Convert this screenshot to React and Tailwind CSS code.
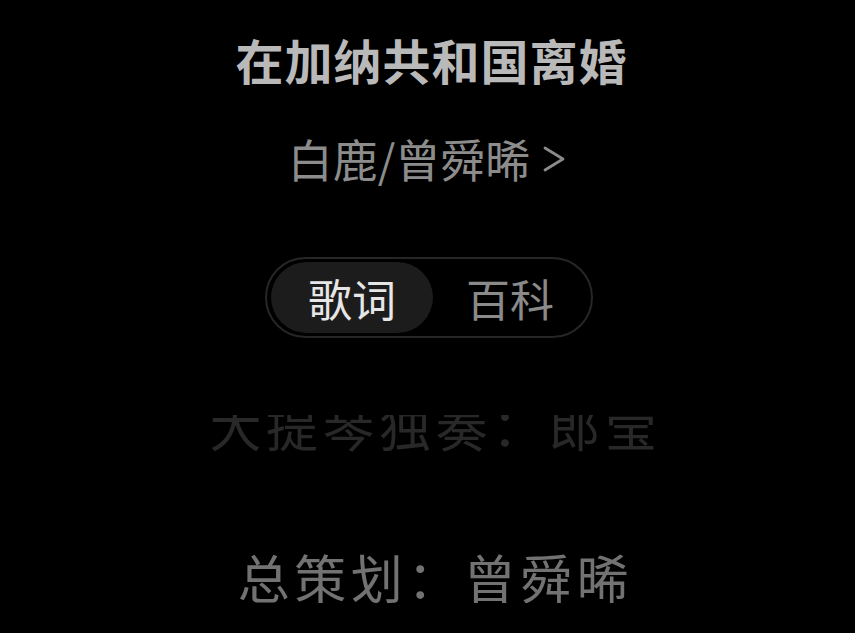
import React, { useState } from "react";

const cjk = { fontFamily: '"Noto Sans CJK SC", "Noto Sans", sans-serif' };

const song = {
  title: "在加纳共和国离婚",
  artists: "白鹿/曾舜晞",
  lines: ["大提琴独奏：郎莹", "总策划：曾舜晞"],
};

const ChevronRight = () => (
  <svg width="26" height="28" viewBox="0 0 26 28" fill="none" className="ml-[11px]">
    <path d="M4 3 L22 14 L4 25" stroke="#8a8a8a" strokeWidth="2.8" strokeLinecap="round" strokeLinejoin="round" />
  </svg>
);

const App = () => {
  const [tab, setTab] = useState("lyrics");

  return (
    <div className="w-[855px] h-[633px] bg-black overflow-hidden flex flex-col items-center" style={cjk}>
      <h1 className="mt-[35px] pl-[8px] text-[48px] leading-none font-bold text-[#b9b9b9] tracking-[1px]">
        {song.title}
      </h1>

      <div className="mt-[53px] flex items-center text-[45px] leading-none text-[#8c8c8c]">
        <span>{song.artists}</span>
        <ChevronRight />
      </div>

      {/* tab switch */}
      <div className="mt-[76px] ml-[3px] w-[328px] h-[81px] rounded-full border-2 border-[#262626] p-[4px] flex items-center">
        <button
          onClick={() => setTab("lyrics")}
          className={`w-[163px] h-[71px] rounded-full text-[44px] leading-none ${
            tab === "lyrics" ? "bg-[#1c1c1c] text-[#e6e6e6]" : "text-[#8a8a8a]"
          }`}
        >
          歌词
        </button>
        <button
          onClick={() => setTab("wiki")}
          className={`w-[155px] h-[71px] rounded-full text-[44px] leading-none ${
            tab === "wiki" ? "bg-[#1c1c1c] text-[#e6e6e6]" : "text-[#8a8a8a]"
          }`}
        >
          百科
        </button>
      </div>

      {/* lyric lines, the top one clipped and fading out */}
      <div className="mt-[77px] w-full overflow-hidden flex flex-col items-center text-[52px] leading-none">
        <div className="-mt-[16px] pl-[16px] text-[#282828] tracking-[4.5px]">{song.lines[0]}</div>
        <div className="mt-[100px] pl-[16px] text-[#727272] tracking-[4.5px]">{song.lines[1]}</div>
      </div>
    </div>
  );
};

export default App;
